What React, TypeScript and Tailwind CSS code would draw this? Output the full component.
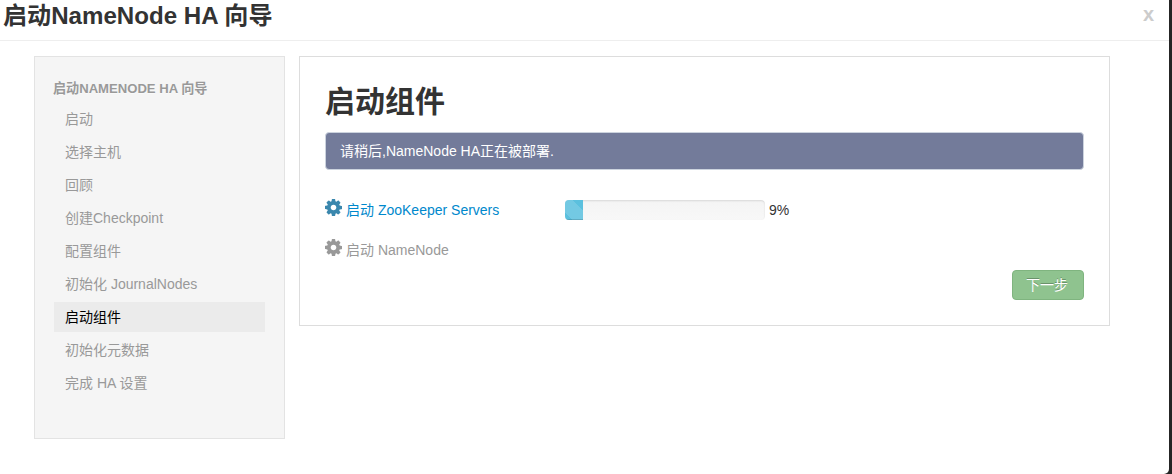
const STEPS = [
  '启动',
  '选择主机',
  '回顾',
  '创建Checkpoint',
  '配置组件',
  '初始化 JournalNodes',
  '启动组件',
  '初始化元数据',
  '完成 HA 设置',
];

const ACTIVE_STEP = 6;

function Cog({ className }: { className: string }) {
  return (
    <svg viewBox="128 128 1536 1536" className={className} fill="currentColor" aria-hidden="true">
      <path d="M1152 896q0-106-75-181t-181-75-181 75-75 181 75 181 181 75 181-75 75-181zm512-109v222q0 12-8 23t-20 13l-185 28q-19 54-39 91 35 50 107 138 10 12 10 25t-9 23q-27 37-99 108t-94 71q-12 0-26-9l-138-108q-44 23-91 38-16 136-29 186-7 28-36 28h-222q-14 0-24.5-8.5t-11.5-21.5l-28-184q-49-16-90-37l-141 107q-10 9-25 9-14 0-25-11-126-114-165-168-7-10-7-23 0-12 8-23 15-21 51-66.5t54-70.5q-27-50-41-99l-183-27q-13-2-21-12.5t-8-23.5v-222q0-12 8-23t19-13l186-28q14-46 39-92-40-57-107-138-10-12-10-24 0-10 9-23 26-36 98.5-107.5t94.5-71.5q13 0 26 10l138 107q44-23 91-38 16-136 29-186 7-28 36-28h222q14 0 24.5 8.5t11.5 21.5l28 184q49 16 90 37l142-107q9-9 24-9 13 0 25 10 129 119 165 170 7 8 7 22 0 12-8 23-15 21-51 66.5t-54 70.5q26 50 41 98l183 28q13 2 21 12.5t8 23.5z" />
    </svg>
  );
}

function Sidebar() {
  return (
    <nav className="h-[383px] w-[251px] shrink-0 border border-[#e3e3e3] bg-[#f5f5f5] pt-[22px] pr-[19px] pl-[19px]">
      <div className="-ml-px h-5 text-[13.1px] leading-5 font-bold whitespace-nowrap text-[#999999] [text-shadow:0_1px_0_rgba(255,255,255,0.5)]">
        启动NAMENODE HA 向导
      </div>
      <ul className="mt-[5px] flex flex-col gap-[3px]">
        {STEPS.map((step, i) => (
          <li
            key={step}
            className={
              i === ACTIVE_STEP
                ? 'h-[30px] bg-[#ebebeb] pl-[11px] leading-[30px] text-black'
                : 'h-[30px] pl-[11px] leading-[30px] text-[#999999]'
            }
          >
            {step}
          </li>
        ))}
      </ul>
    </nav>
  );
}

function ProgressBar({ percent }: { percent: number }) {
  return (
    <div className="h-5 w-[200px] overflow-hidden rounded-[4px] bg-[#f6f6f6] bg-linear-to-b from-[#f4f4f4] to-[#f8f8f8] shadow-[inset_0_1px_2px_rgba(0,0,0,0.12)]">
      <div
        className="h-full bg-[#5bc0de] bg-[linear-gradient(45deg,rgba(255,255,255,0.15)_25%,transparent_25%,transparent_50%,rgba(255,255,255,0.15)_50%,rgba(255,255,255,0.15)_75%,transparent_75%,transparent)] bg-[length:40px_40px] bg-[position:-12px_0] shadow-[inset_0_-1px_0_rgba(0,0,0,0.15)]"
        style={{ width: `${percent}%` }}
      />
    </div>
  );
}

export default function App() {
  return (
    <div className="h-[474px] w-[1172px] overflow-hidden bg-[#252525] pr-[3px] font-['Liberation_Sans','Noto_Sans_CJK_SC',sans-serif] text-[14px] text-[#333333]">
      <div className="h-full rounded-br-[5px] bg-white">
        <header className="flex h-[41px] justify-between border-b border-[#eeeeee] pr-[15px] pl-[3px]">
          <h3 className="h-[32px] text-[24.1px] leading-[32px] font-bold whitespace-nowrap">启动NameNode HA 向导</h3>
          <button className="h-[28px] text-[20px] leading-[26px] font-bold text-[#cccccc]">x</button>
        </header>
        <div className="flex items-start gap-[14px] pt-[15px] pl-[34px]">
          <Sidebar />
          <main className="h-[270px] w-[811px] border border-[#dddddd] pt-[25px] pr-[25px] pl-[25px]">
            <h2 className="h-10 text-[30px] leading-10 font-bold">启动组件</h2>
            <div className="mt-[10px] h-[38px] rounded-[4px] border border-[#ccd3de] bg-[#737b9a] pl-[14px] leading-[36px] text-white">
              请稍后,NameNode HA正在被部署.
            </div>
            <div className="mt-[30px] flex h-5 items-center leading-5">
              <div className="flex w-[240px] items-center text-[#0088cc]">
                <Cog className="-mt-[6px] mr-[4px] size-[17px] text-[#3a87ad]" />
                启动 ZooKeeper Servers
              </div>
              <ProgressBar percent={9} />
              <span className="ml-[4px]">9%</span>
            </div>
            <div className="mt-5 flex h-5 items-center leading-5 text-[#999999]">
              <Cog className="-mt-[6px] mr-[4px] size-[17px]" />
              启动 NameNode
            </div>
            <div className="mt-[10px] flex justify-end">
              <button className="h-[30px] w-[72px] rounded-[4px] border border-[#7fb47f] bg-[#8fc38f] pr-[2px] leading-[28px] text-white [text-shadow:0_-1px_0_rgba(0,0,0,0.25)]">
                下一步
              </button>
            </div>
          </main>
        </div>
      </div>
    </div>
  );
}
